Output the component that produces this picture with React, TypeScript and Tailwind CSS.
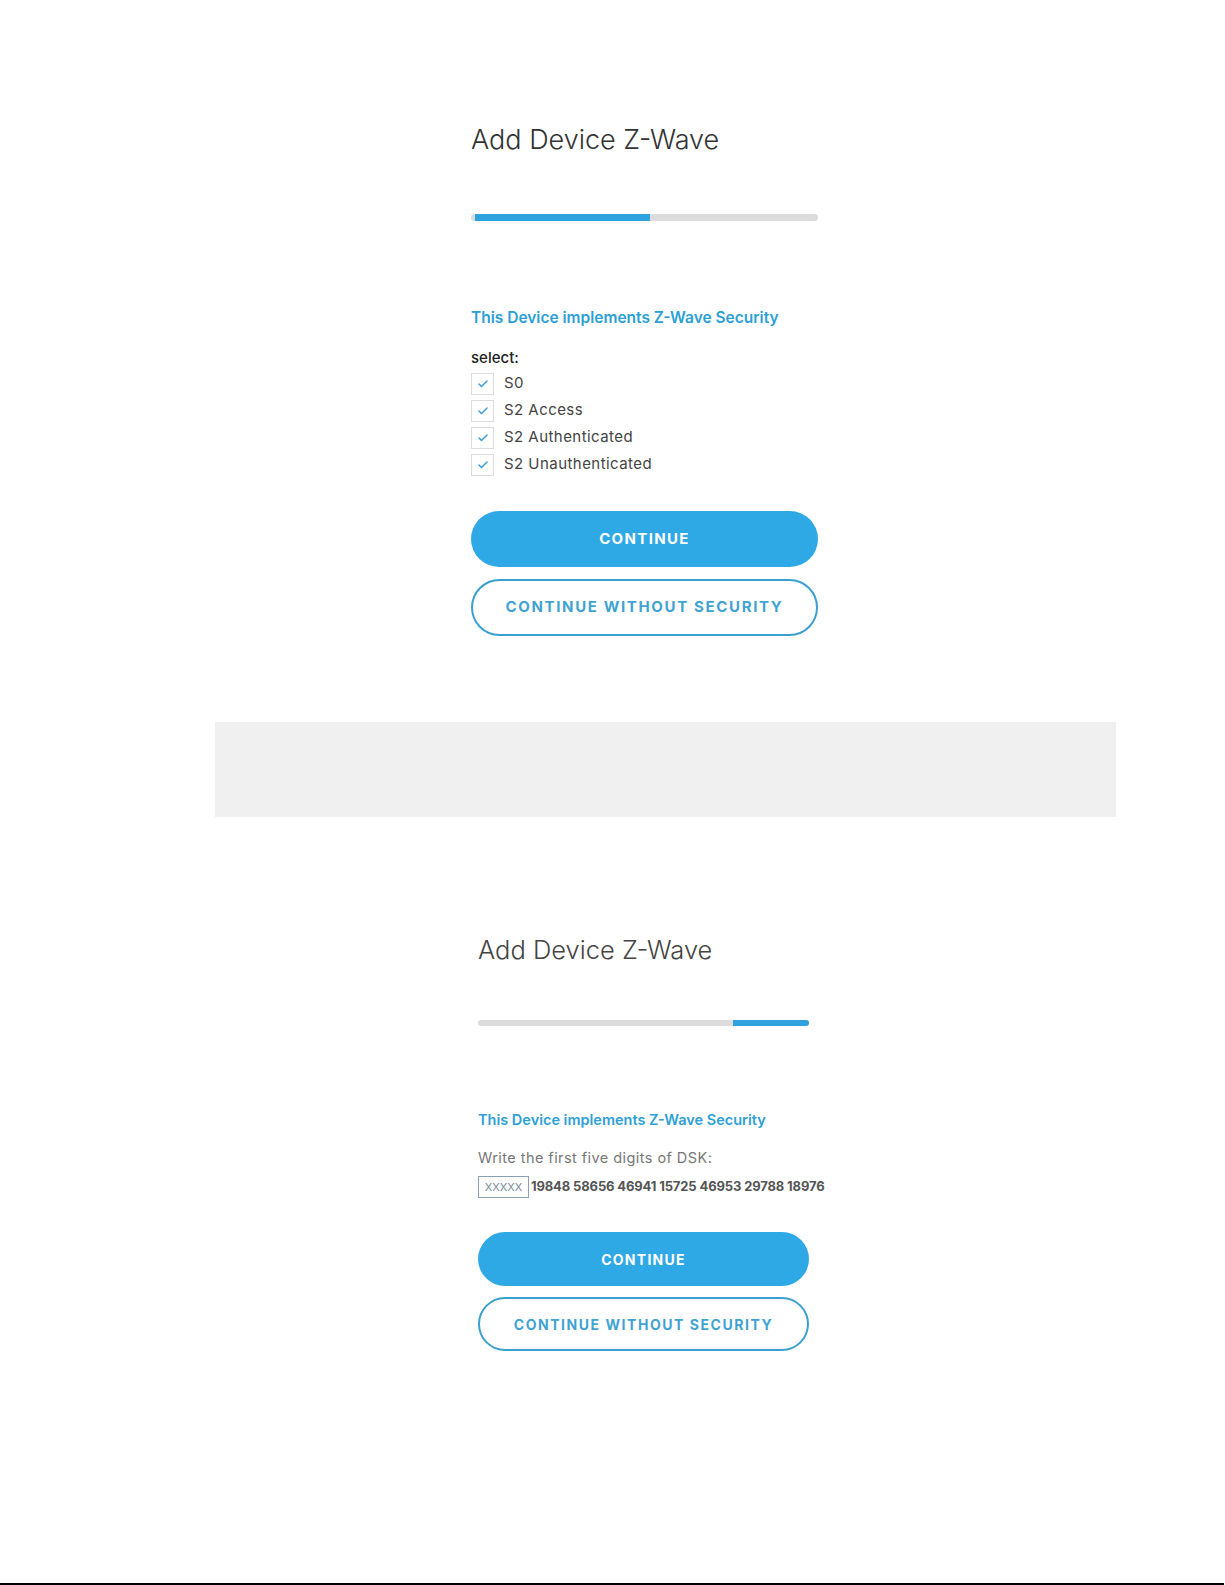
import { Check } from "lucide-react";

const levels = ["S0", "S2 Access", "S2 Authenticated", "S2 Unauthenticated"];
const dsk = "19848 58656 46941 15725 46953 29788 18976";

function SecurityOption({ label }: { label: string }) {
  return (
    <label className="flex h-[27px] items-center gap-[10px]">
      <span className="flex h-[22px] w-[23px] items-center justify-center border border-[#dcdcdc] bg-white">
        <Check className="h-[12px] w-[12px] text-[#3a9fd2]" strokeWidth={3} />
      </span>
      <span className="text-[15px] tracking-[0.03em] text-[#444]">{label}</span>
    </label>
  );
}

function Buttons({ size }: { size: "lg" | "md" }) {
  const lg = size === "lg";
  return (
    <div className={lg ? "flex flex-col gap-[12px]" : "flex flex-col gap-[11px]"}>
      <button
        type="button"
        className={`rounded-full bg-[#2fa8e6] font-bold tracking-[0.09em] text-white ${
          lg ? "h-[56px] text-[15px]" : "h-[54px] text-[14px]"
        }`}
      >
        CONTINUE
      </button>
      <button
        type="button"
        className={`rounded-full border-2 border-[#3aa0d0] bg-white font-bold tracking-[0.11em] text-[#3fa3d3] ${
          lg ? "h-[57px] text-[15px]" : "h-[54px] text-[14px]"
        }`}
      >
        CONTINUE WITHOUT SECURITY
      </button>
    </div>
  );
}

export default function App() {
  return (
    <div className="flex h-[1585px] flex-col bg-white font-['Inter',sans-serif]">
      {/* step 1: pick security classes */}
      <section className="ml-[471px] mt-[124px] flex w-[347px] flex-col">
        <h1 className="text-[27px] font-light leading-[32px] text-[#333]">Add Device Z-Wave</h1>
        <div className="mt-[58px] h-[7px] w-full rounded-full bg-[#dcdcdc]">
          <div className="ml-[4px] h-full w-[175px] bg-[#2ea3e0]" />
        </div>
        <p className="mt-[87px] text-[15.5px] font-semibold leading-[20px] text-[#2b9fd6]">
          This Device implements Z-Wave Security
        </p>
        <p className="mt-[20px] text-[15px] font-medium leading-[20px] text-[#222]">select:</p>
        <div className="mt-[2px] flex flex-col">
          {levels.map((l) => (
            <SecurityOption key={l} label={l} />
          ))}
        </div>
        <div className="mt-[33px]">
          <Buttons size="lg" />
        </div>
      </section>

      <div className="ml-[215px] mt-[86px] h-[95px] w-[901px] bg-[#f0f0f0]" />

      {/* step 2: confirm DSK */}
      <section className="ml-[478px] mt-[118px] flex w-[331px] flex-col">
        <h1 className="text-[25.5px] font-light leading-[30px] text-[#444]">Add Device Z-Wave</h1>
        <div className="mt-[55px] flex h-[6px] w-full rounded-full bg-[#dcdcdc]">
          <div className="ml-auto h-full w-[76px] rounded-r-full bg-[#2ea3e0]" />
        </div>
        <p className="mt-[84px] text-[14.5px] font-semibold leading-[20px] text-[#2ea0d5]">
          This Device implements Z-Wave Security
        </p>
        <p className="mt-[19px] text-[14.5px] tracking-[0.03em] leading-[18px] text-[#777]">
          Write the first five digits of DSK:
        </p>
        <div className="mt-[9px] flex items-center gap-[2px] whitespace-nowrap">
          <span className="flex h-[22px] w-[51px] shrink-0 items-center justify-center border border-[#8aa0b5] text-[11px] text-[#7a8a9a]">
            XXXXX
          </span>
          <span className="text-[13px] font-bold tracking-[-0.01em] text-[#555]">{dsk}</span>
        </div>
        <div className="mt-[34px]">
          <Buttons size="md" />
        </div>
      </section>

      <div className="mt-auto h-[2px] w-[1224px] bg-black" />
    </div>
  );
}
